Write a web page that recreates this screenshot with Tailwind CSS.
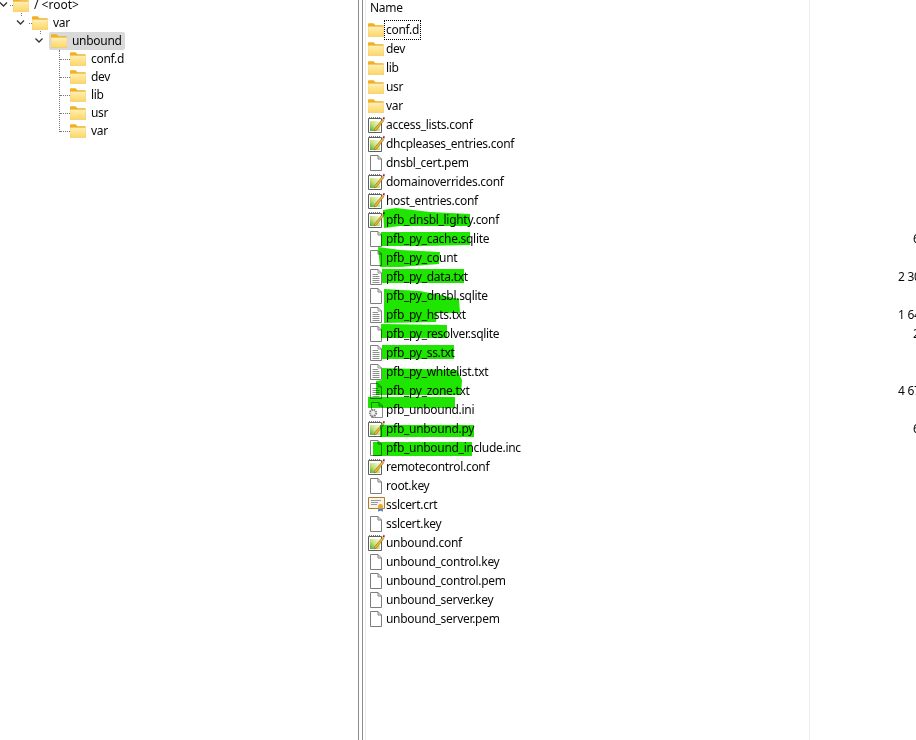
<!DOCTYPE html>
<html lang="en">
<head>
  <meta charset="UTF-8">
  <title>unbound</title>
  <script src="https://cdn.jsdelivr.net/npm/@tailwindcss/browser@4"></script>
</head>
<body class="relative h-[740px] w-[916px] overflow-hidden bg-white font-['Noto_Sans',sans-serif] text-[12px] tracking-[-0.3px] text-[#0a0a0a]">
  <svg class="absolute h-0 w-0">
    <defs>
      <linearGradient id="fg" x1="0" y1="0" x2="0" y2="1"><stop offset="0" stop-color="#fff0b5"/><stop offset="1" stop-color="#fdd566"/></linearGradient>
      <linearGradient id="ng" x1="1" y1="0" x2="0" y2="1"><stop offset="0" stop-color="#fbfbe8"/><stop offset=".55" stop-color="#c5e07a"/><stop offset="1" stop-color="#4aa838"/></linearGradient>
      <symbol id="folder" viewBox="0 0 16 14"><path d="M0 1.500C0 .8.5.3 1 .3h4.500L7.500 2.300H15.500V4H0Z" fill="#f2b01e"/><path d="M0 3.500h16V13.700H0Z" fill="url(#fg)" stroke="#edc163" stroke-width=".5"/></symbol>
      <symbol id="blank" viewBox="0 0 14 16"><path d="M1.500.5H9L12.500 4V15.500H1.500Z" fill="#fff" stroke="#7d7d7d"/><path d="M9 .5V4H12.500" fill="none" stroke="#7d7d7d"/></symbol>
      <symbol id="text" viewBox="0 0 14 16"><path d="M1.500.5H9L12.500 4V15.500H1.500Z" fill="#fff" stroke="#7d7d7d"/><path d="M9 .5V4H12.500M3.500 5.500H9M3.500 7.500H10.500M3.500 9.500H10.500M3.500 11.500H10.500M3.500 13.500H10.500" fill="none" stroke="#8f8f8f"/></symbol>
      <symbol id="note" viewBox="0 0 17 17"><path d="M.5 2.500H13.500V16.500H.5Z" fill="#fff" stroke="#5f5f5f"/><path d="M1 1.500H13" stroke="#777" stroke-dasharray="1 1"/><path d="M2 5H12V15H2Z" fill="url(#ng)"/><path d="M6.500 13L14.200 3.500L15.800 4.700L8.300 14.200L6 15Z" fill="#f2b632" stroke="#7a5a10" stroke-width=".5"/><path d="M14.600 2.800L15.800 .8L16.800 1.800L16.200 3.800Z" fill="#a01818"/></symbol>
      <symbol id="gear" viewBox="0 0 16 16"><path d="M3.500.5H11L14.500 4V15.500H3.500Z" fill="#fff" stroke="#8a8a8a"/><path d="M11 .5V4H14.500" fill="none" stroke="#8a8a8a"/><circle cx="5" cy="11" r="3.200" fill="#eee" stroke="#777" stroke-width="1.800" stroke-dasharray="1.400 .8"/></symbol>
      <symbol id="cert" viewBox="0 0 17 15"><path d="M.5.5H16.500V11.500H.5Z" fill="#fdf3e0" stroke="#a87d3a"/><path d="M3 3.500H13M3 5.500H10M3 7.500H9" stroke="#8f9bb0"/><path d="M10.500 11L10 14.800L12.500 13.500L15 14.800L14.500 11Z" fill="#3c79c8"/><circle cx="12.500" cy="9.500" r="2.500" fill="#eea62a"/></symbol>
    </defs>
  </svg>

  <div class="flex h-full">
    <!-- tree -->
    <aside class="relative h-full w-[359px] shrink-0 overflow-hidden border-r border-[#8c8c8c]">
      <!-- stray dots of the tree lines -->
      <i class="absolute left-[10px] top-[5px] w-[3px] border-t border-dotted border-[#777]"></i>
      <i class="absolute left-[21px] top-[13px] h-[3px] border-l border-dotted border-[#777]"></i>
      <i class="absolute left-[29px] top-[23px] w-[3px] border-t border-dotted border-[#777]"></i>
      <i class="absolute left-[40px] top-[31px] h-[3px] border-l border-dotted border-[#777]"></i>

      <div class="-mt-[4px] flex h-[18px] items-center">
        <svg class="h-2 w-[13px]" viewBox="0 0 13 8"><path d="M0 1.500L3.500 5L7 1.500" fill="none" stroke="#333" stroke-width="1.300"/></svg>
        <svg class="mr-[5px] h-[14px] w-4"><use href="#folder"/></svg><span class="tracking-normal">/ &lt;root&gt;</span>
      </div>
      <div class="flex h-[18px] items-center pl-[16px]">
        <svg class="mr-[6px] h-2 w-[10px]" viewBox="0 0 10 8"><path d="M1 1.500L4.500 5L8 1.500" fill="none" stroke="#333" stroke-width="1.300"/></svg>
        <svg class="mr-[5px] h-[14px] w-4"><use href="#folder"/></svg><span>var</span>
      </div>
      <div class="flex h-[18px] items-center pl-[35px]">
        <svg class="mr-[5px] h-2 w-[9px]" viewBox="0 0 9 8"><path d="M.5 1.500L4 5L7.500 1.500" fill="none" stroke="#333" stroke-width="1.300"/></svg>
        <div class="flex h-[18px] w-[76px] items-center rounded-[2px] bg-[#d9d9d9] pl-[2px]">
          <svg class="mr-[5px] h-[14px] w-4"><use href="#folder"/></svg><span>unbound</span>
        </div>
      </div>
      <div class="relative pl-[70px]">
        <div class="absolute left-[59px] top-0 h-[82px] w-px border-l border-dotted border-[#777]"></div>
        <div class="relative flex h-[18px] items-center"><i class="absolute -left-[10px] top-[9px] w-[10px] border-t border-dotted border-[#777]"></i><svg class="mr-[5px] h-[14px] w-4"><use href="#folder"/></svg><span>conf.d</span></div>
        <div class="relative flex h-[18px] items-center"><i class="absolute -left-[10px] top-[9px] w-[10px] border-t border-dotted border-[#777]"></i><svg class="mr-[5px] h-[14px] w-4"><use href="#folder"/></svg><span>dev</span></div>
        <div class="relative flex h-[18px] items-center"><i class="absolute -left-[10px] top-[9px] w-[10px] border-t border-dotted border-[#777]"></i><svg class="mr-[5px] h-[14px] w-4"><use href="#folder"/></svg><span>lib</span></div>
        <div class="relative flex h-[18px] items-center"><i class="absolute -left-[10px] top-[9px] w-[10px] border-t border-dotted border-[#777]"></i><svg class="mr-[5px] h-[14px] w-4"><use href="#folder"/></svg><span>usr</span></div>
        <div class="relative flex h-[18px] items-center"><i class="absolute -left-[10px] top-[9px] w-[10px] border-t border-dotted border-[#777]"></i><svg class="mr-[5px] h-[14px] w-4"><use href="#folder"/></svg><span>var</span></div>
      </div>
    </aside>

    <!-- file list -->
    <main id="list" class="relative ml-[3px] h-full min-w-0 flex-1 overflow-hidden border-l border-[#8c8c8c]"></main>
  </div>

  <!-- green highlighter scribbles over the list -->
  <svg class="pointer-events-none absolute left-0 top-0 h-[740px] w-[916px] mix-blend-multiply" viewBox="0 0 916 740" fill="#1ee600">
    <path d="M383 210L396 208L430 212L470 214V226L400 226L384 228Z"/>
    <path d="M381 232H470V245L420 246H381Z"/>
    <path d="M378 247L400 250L440 252L439 264L400 267H380Z"/>
    <path d="M382 269H464V283H382Z"/>
    <path d="M384 289L420 291L459 299L460 313L437 313L436 322L384 323Z"/>
    <path d="M381 324L447 325V338H381Z"/>
    <path d="M382 345H454V359H382Z"/>
    <path d="M382 368L457 370L462 380L461 395H376V381L382 380Z"/>
    <path d="M368 397H455V408H368Z"/>
    <path d="M380 425H474V437H380Z"/>
    <path d="M373 442H472V456H373Z"/>
  </svg>

  <script>
    // name, icon, size fragment
    const files = [
      ['conf.d', 'folder'], ['dev', 'folder'], ['lib', 'folder'], ['usr', 'folder'], ['var', 'folder'],
      ['access_lists.conf', 'note'], ['dhcpleases_entries.conf', 'note'], ['dnsbl_cert.pem', 'blank'],
      ['domainoverrides.conf', 'note'], ['host_entries.conf', 'note'],
      ['pfb_dnsbl_lighty.conf', 'note'],
      ['pfb_py_cache.sqlite', 'blank', '6'],
      ['pfb_py_count', 'blank'],
      ['pfb_py_data.txt', 'text', '2 30'],
      ['pfb_py_dnsbl.sqlite', 'blank'],
      ['pfb_py_hsts.txt', 'text', '1 64'],
      ['pfb_py_resolver.sqlite', 'blank', '2'],
      ['pfb_py_ss.txt', 'text'],
      ['pfb_py_whitelist.txt', 'text'],
      ['pfb_py_zone.txt', 'text', '4 67'],
      ['pfb_unbound.ini', 'gear'],
      ['pfb_unbound.py', 'note', '6'],
      ['pfb_unbound_include.inc', 'blank'],
      ['remotecontrol.conf', 'note'], ['root.key', 'blank'], ['sslcert.crt', 'cert'], ['sslcert.key', 'blank'],
      ['unbound.conf', 'note'], ['unbound_control.key', 'blank'], ['unbound_control.pem', 'blank'],
      ['unbound_server.key', 'blank'], ['unbound_server.pem', 'blank'],
    ];
    const sizes = { folder: 'h-[14px] w-4', note: 'h-[17px] w-[17px]', blank: 'h-4 w-[14px]', text: 'h-4 w-[14px]', gear: 'h-4 w-4', cert: 'h-[15px] w-[17px]' };
    const list = document.getElementById('list');
    list.innerHTML =
      '<div class="absolute left-[2px] top-0 h-full w-px bg-[#e8eef5]"></div>' +
      '<div class="absolute left-[446px] top-0 h-full w-px bg-[#e8eef5]"></div>' +
      '<div class="flex h-[20px] items-center pb-[5px] pl-[7px]">Name</div>';
    files.forEach(([name, icon, size], i) => {
      const row = document.createElement('div');
      row.className = 'relative flex h-[19px] items-center pl-[4px]';
      const left = size && size.length > 1 ? 'left-[535px]' : 'left-[550px]';
      row.innerHTML =
        `<span class="relative flex w-[18px] justify-center"><svg class="${sizes[icon]}"><use href="#${icon}"/></svg></span>` +
        `<span class="relative px-[1px] ${i === 0 ? 'outline-1 outline-dotted outline-black' : ''}">${name}</span>` +
        (size ? `<span class="absolute ${left} whitespace-pre">${size}</span>` : '');
      list.appendChild(row);
    });
  </script>
</body>
</html>
